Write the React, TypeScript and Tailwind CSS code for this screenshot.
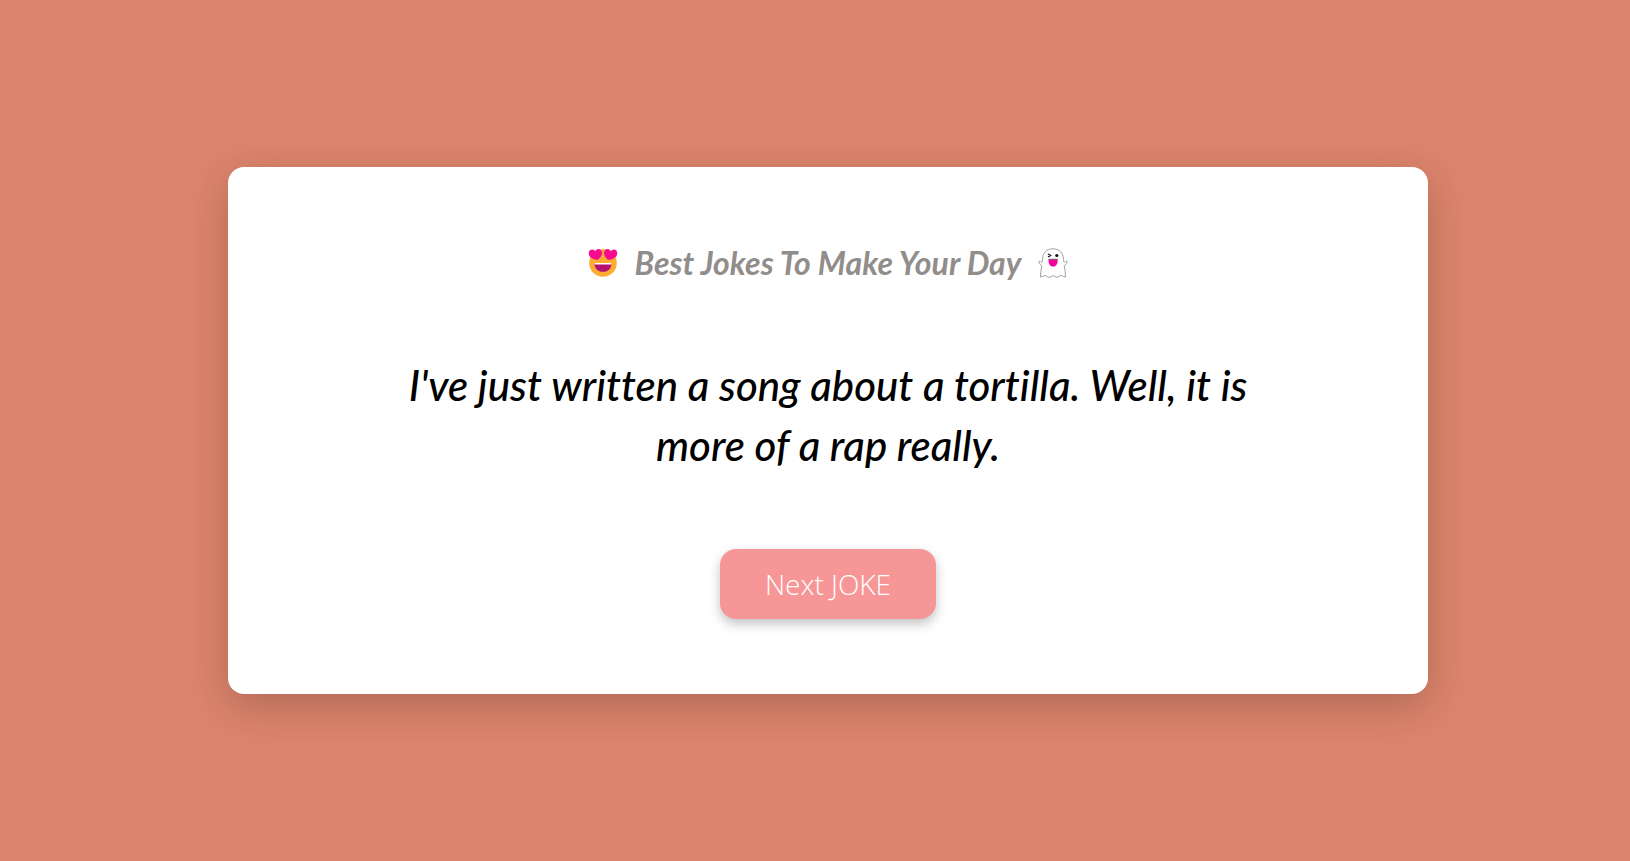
import { useState } from "react";

const jokes: string[] = [
  "I've just written a song about a tortilla. Well, it is more of a rap really.",
];

function HeartEyes() {
  return (
    <svg viewBox="0 0 30 30" className="size-[30px] shrink-0" role="img" aria-label="Smiling face with heart eyes">
      <circle cx="15" cy="15" r="13.8" fill="#fcab33" />
      <path
        d="M10 11.8C6 11.8 2 10 1 7C0 3.6 1.8 1.6 4 1.5C5.500 1.4 6.600 2.200 7.200 3.400C7.700 1.900 8.900 1 10.300 1C12.600 1 14.200 2.900 13.900 5.500C13.600 8 12 10.200 10 11.800Z"
        fill="#f70a8d"
      />
      <path
        d="M20 11.8C24 11.8 28 10 29 7C30 3.6 28.2 1.6 26 1.5C24.500 1.4 23.400 2.200 22.800 3.400C22.300 1.900 21.100 1 19.700 1C17.400 1 15.800 2.900 16.100 5.500C16.400 8 18 10.200 20 11.800Z"
        fill="#f70a8d"
      />
      <path d="M6.5 15H23.5C23.5 20.6 20.2 23.8 15 23.8C9.8 23.8 6.5 20.6 6.5 15Z" fill="#b3126f" />
      <path d="M6.5 15H23.5L23.2 16.6H6.8Z" fill="#fff" />
    </svg>
  );
}

function Ghost() {
  return (
    <svg viewBox="0 0 30 30" className="size-[30px] shrink-0" role="img" aria-label="Ghost">
      <path
        d="M15 .8C8.5 .8 4.5 5 4.5 11.5C4.5 13.5 4.2 14.5 3.5 14.2C2.6 13.7 2 12.8 1.2 13.2C.2 13.7 1 16 3.8 17.8C3 22 2.5 25 2.5 29C5 29 5.5 27.5 7 27.6C8.8 27.8 9 29.2 11 29.2C13 29.2 13.3 27.8 15 27.8C16.7 27.8 17 29.2 19 29.2C21 29.2 21.2 27.7 23 27.6C24.5 27.5 25 29 27.5 29C27.5 25 27 22 26.2 17.8C29 16 29.8 13.7 28.8 13.2C28 12.8 27.4 13.7 26.5 14.2C25.8 14.5 25.5 13.5 25.5 11.5C25.5 5 21.5 .8 15 .8Z"
        fill="#fff"
        stroke="#8c8c8c"
        strokeWidth="0.8"
        strokeLinejoin="round"
      />
      <path d="M10 6L12.6 7.5L10 9" fill="none" stroke="#151515" strokeWidth="1.3" />
      <circle cx="18.8" cy="7.5" r="1.6" fill="#151515" />
      <path d="M10.5 11.5H19.7C19.7 16.3 18.2 18.6 15.1 18.6C12 18.6 10.5 16.3 10.5 11.5Z" fill="#f700a0" />
      <path d="M10.5 11.3H19.7" stroke="#333" strokeWidth="0.7" />
    </svg>
  );
}

export default function App() {
  const [index, setIndex] = useState(0);

  return (
    <main className="flex min-h-screen items-center justify-center bg-[#dc846c] py-4 pr-4 pl-[42px] font-['Lato',sans-serif] [font-variant-ligatures:none]">
      <section className="flex w-full max-w-[1200px] flex-col items-center rounded-2xl bg-white px-8 pt-[76px] pb-[75px] text-center shadow-[0_12px_40px_rgba(0,0,0,0.2)]">
        <header className="flex items-center gap-4">
          <HeartEyes />
          <h1 className="text-[32px] leading-10 font-bold text-[#918d8b] italic">Best Jokes To Make Your Day</h1>
          <Ghost />
        </header>
        <p className="mt-18 mb-[74px] max-w-[900px] text-[42px] leading-[60px] font-medium text-black italic">
          {jokes[index]}
        </p>
        <button
          type="button"
          onClick={() => setIndex((index + 1) % jokes.length)}
          className="cursor-pointer rounded-2xl bg-[#f69696] px-[45px] py-[15px] font-['Open_Sans',sans-serif] text-[28px] leading-10 font-light text-white shadow-[0_5px_12px_rgba(0,0,0,0.24)]"
        >
          Next JOKE
        </button>
      </section>
    </main>
  );
}
